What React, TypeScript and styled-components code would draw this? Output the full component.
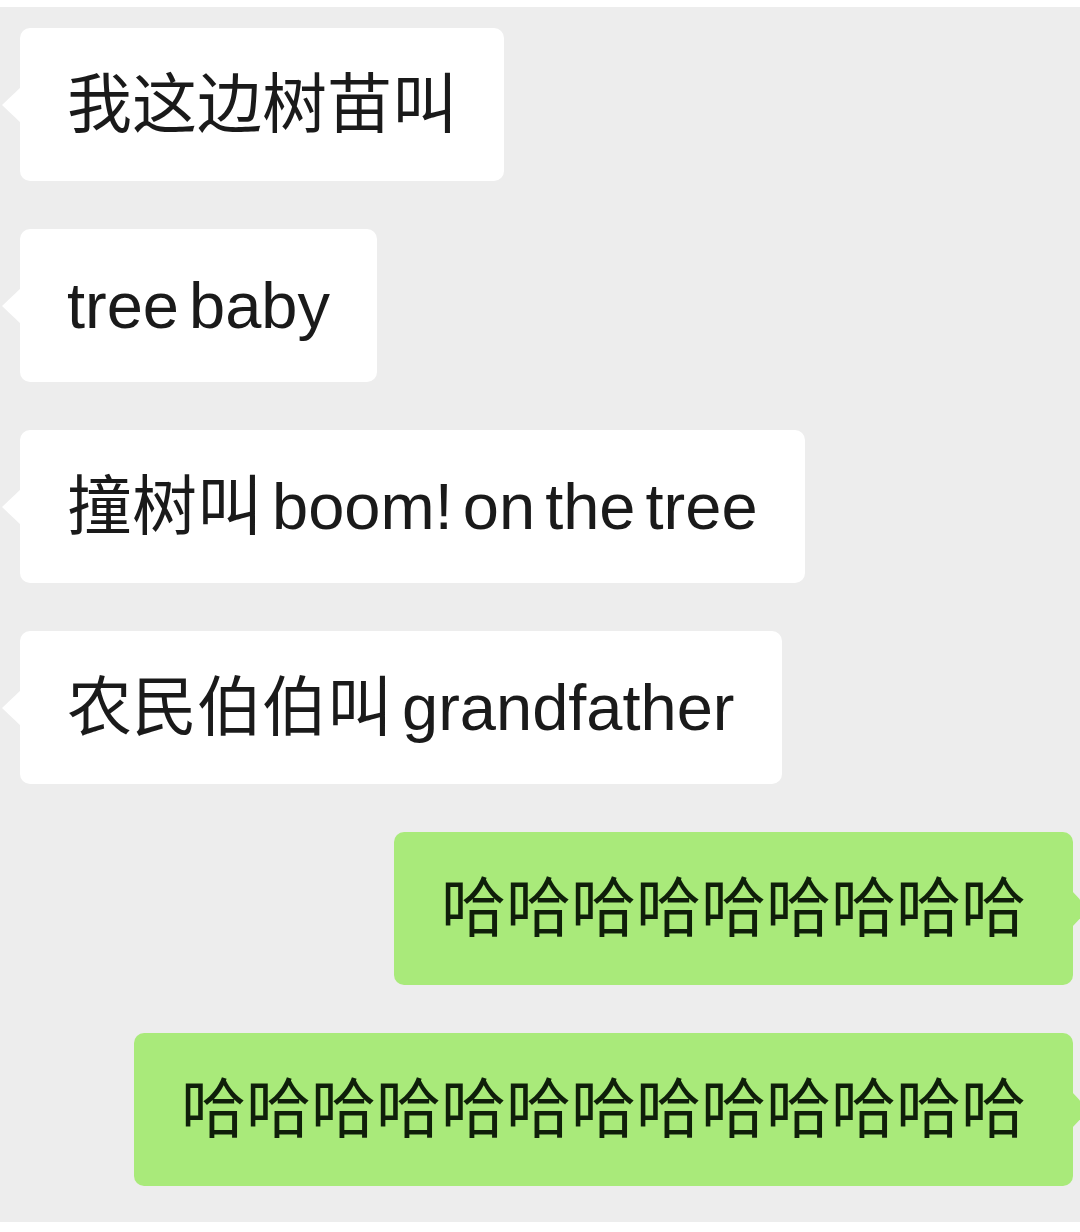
import React from "react";
import styled, { createGlobalStyle, css } from "styled-components";

const GlobalStyle = createGlobalStyle`
  html, body {
    margin: 0;
    padding: 0;
    background: #ffffff;
  }
  * { box-sizing: border-box; }
`;

const Page = styled.div`
  width: 1080px;
  height: 1232px;
  background: #ffffff;
  padding-top: 7px;
  overflow: hidden;
`;

const ChatArea = styled.div`
  height: 1215px;
  background: #ededed;
  padding: 21px 7px 0 20px;
  display: flex;
  flex-direction: column;
  gap: 48px;
`;

const Row = styled.div<{ $mine?: boolean }>`
  display: flex;
  justify-content: ${(p) => (p.$mine ? "flex-end" : "flex-start")};
`;

const Bubble = styled.div<{ $mine?: boolean }>`
  position: relative;
  height: 153px;
  padding: 0 47px;
  display: flex;
  align-items: center;
  border-radius: 10px;
  background: ${(p) => (p.$mine ? "#a9ea7a" : "#ffffff")};
  color: ${(p) => (p.$mine ? "#0f1f0a" : "#1a1a1a")};
  font-family: "Liberation Sans", "Noto Sans CJK SC", sans-serif;
  font-size: 65px;
  line-height: 1;
  word-spacing: -8px;
  white-space: nowrap;

  &::before {
    content: "";
    position: absolute;
    top: 50%;
    margin-top: -18px;
    border-top: 18px solid transparent;
    border-bottom: 18px solid transparent;
    ${(p) =>
      p.$mine
        ? css`
            right: -16px;
            border-left: 17px solid #a9ea7a;
          `
        : css`
            left: -18px;
            border-right: 19px solid #ffffff;
          `}
  }
`;

const messages: { text: string; mine?: boolean }[] = [
  { text: "我这边树苗叫" },
  { text: "tree baby" },
  { text: "撞树叫 boom! on the tree" },
  { text: "农民伯伯叫 grandfather" },
  { text: "哈哈哈哈哈哈哈哈哈", mine: true },
  { text: "哈哈哈哈哈哈哈哈哈哈哈哈哈", mine: true },
];

export default function App() {
  return (
    <Page>
      <GlobalStyle />
      <ChatArea>
        {messages.map((m, i) => (
          <Row key={i} $mine={m.mine}>
            <Bubble $mine={m.mine}>{m.text}</Bubble>
          </Row>
        ))}
      </ChatArea>
    </Page>
  );
}
